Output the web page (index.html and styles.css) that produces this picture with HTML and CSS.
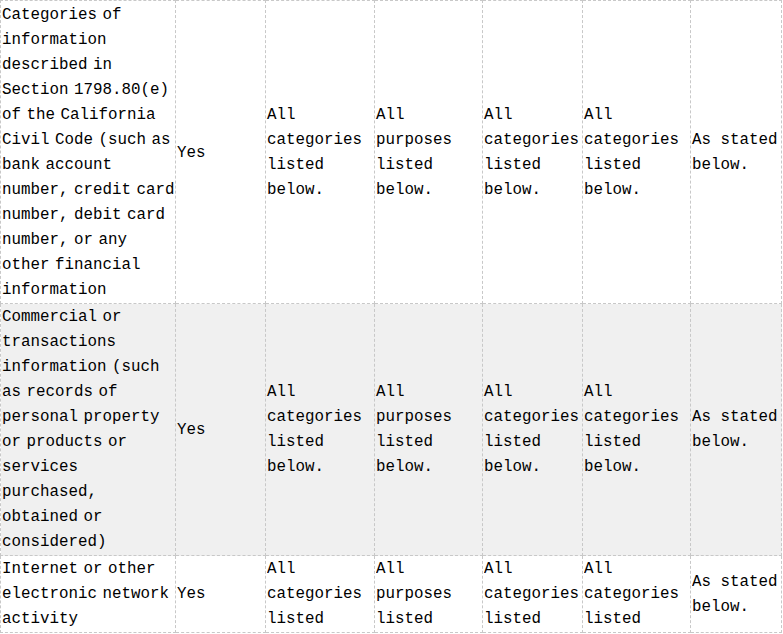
FILE: index.html
```html
<!DOCTYPE html>
<html lang="en">
<head>
<meta charset="utf-8">
<title>Categories table</title>
<link rel="stylesheet" href="styles.css">
</head>
<body>
<table class="cat-table">
  <colgroup>
    <col class="c1"><col class="c2"><col class="c3"><col class="c4"><col class="c5"><col class="c6"><col class="c7">
  </colgroup>
  <tbody>
    <tr class="first">
      <td class="label">Categories of information described in Section 1798.80(e) of the California Civil Code (such as bank account number, credit card number, debit card number, or any other financial information</td>
      <td>Yes</td>
      <td>All categories listed below.</td>
      <td>All purposes listed below.</td>
      <td>All categories listed below.</td>
      <td>All categories listed below.</td>
      <td>As stated below.</td>
    </tr>
    <tr class="alt">
      <td class="label">Commercial or transactions information (such as records of personal property or products or services purchased, obtained or considered)</td>
      <td>Yes</td>
      <td>All categories listed below.</td>
      <td>All purposes listed below.</td>
      <td>All categories listed below.</td>
      <td>All categories listed below.</td>
      <td>As stated below.</td>
    </tr>
    <tr class="last">
      <td class="label"><div class="clip">Internet or other electronic network activity</div></td>
      <td><div class="clip">Yes</div></td>
      <td><div class="clip">All categories listed below.</div></td>
      <td><div class="clip">All purposes listed below.</div></td>
      <td><div class="clip">All categories listed below.</div></td>
      <td><div class="clip">All categories listed below.</div></td>
      <td><div class="clip">As stated below.</div></td>
    </tr>
  </tbody>
</table>
</body>
</html>
```
FILE: styles.css
```css
html, body {
  margin: 0;
  padding: 0;
  background: #fff;
}
body {
  font-family: "Liberation Mono", "Noto Sans CJK SC", monospace;
  font-size: 15.83px;
  line-height: 25px;
  color: #000;
}
.cat-table {
  border-collapse: collapse;
  table-layout: fixed;
  width: 782px;
}
.c1 { width: 175px; }
.c2 { width: 90px; }
.c3 { width: 109px; }
.c4 { width: 108px; }
.c5 { width: 100px; }
.c6 { width: 108px; }
.c7 { width: 91px; }
.cat-table td {
  border: 1px dashed #c8c8c8;
  padding: 0 0 0 1px;
  vertical-align: middle;
}
.first td {
  padding-top: 2px;
}
.alt td {
  background: #f0f0f0;
  padding-top: 1px;
}
.last td {
  padding-top: 1px;
}
.label {
  word-spacing: -4px;
}
.clip {
  max-height: 75px;
  overflow: hidden;
}
```
